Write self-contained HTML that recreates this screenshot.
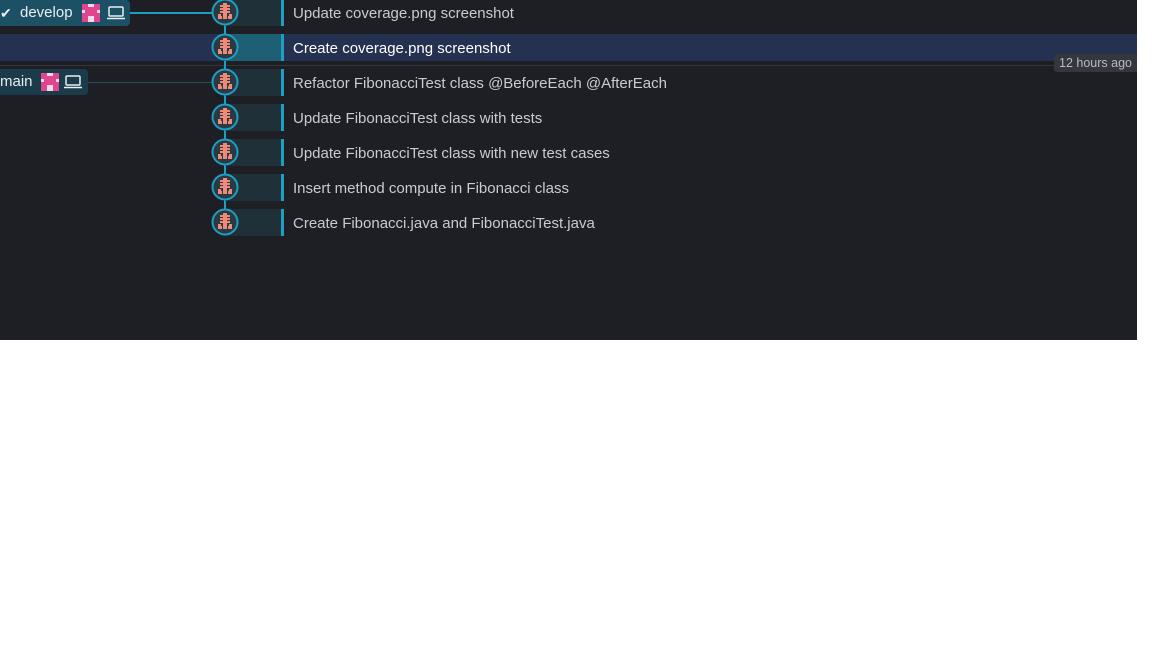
<!DOCTYPE html>
<html><head><meta charset="utf-8"><style>
html,body{margin:0;padding:0;background:#fff;width:1152px;height:648px;overflow:hidden}
#p{position:absolute;left:0;top:0;width:1137px;height:340px;background:#1e1f24;font-family:"Liberation Sans",sans-serif}
.row{position:absolute;left:0;width:1137px;height:27px}
.strip{position:absolute;left:225px;width:56px;height:27px;background:#1f3038}
.bar{position:absolute;left:281px;width:3px;height:27px;background:#1ba0c4}
.msg{position:absolute;left:293px;font-size:15px;line-height:29px;color:#c8ccd2;white-space:nowrap}
.av{position:absolute;left:211px;width:28px;height:28px}
.lbl{position:absolute;left:0;height:26px;border-radius:0 4px 4px 0;color:#e8edf0;font-size:15px;line-height:26px;white-space:nowrap}
</style></head><body><div id="p">
<div style="position:absolute;left:0;top:65px;width:1137px;height:1px;background:#33353b"></div>
<div style="position:absolute;left:224px;top:12px;width:2px;height:210px;background:#1ba0c4"></div>
<div style="position:absolute;left:130px;top:12px;width:82px;height:2px;background:#1ba0c4"></div>
<div style="position:absolute;left:88px;top:82px;width:124px;height:1px;background:#23505e"></div>
<div class="row" style="top:34px;background:#253150"></div>
<div id="rows"></div>
<div class="lbl" style="top:0;width:130px;background:#1c5165"><span style="position:absolute;left:0;top:0;font-size:14px">✔</span><span style="position:absolute;left:20px">develop</span>
<svg style="position:absolute;left:82px;top:4px" width="18" height="18" viewBox="0 0 6 6"><rect width="6" height="6" fill="#f4d9e6"/><path d="M0 0h2v1h2v-1h2v2h-1v1h1v3h-2v-2h-2v2h-2v-3h1v-1h-1z" fill="#e0468f"/></svg>
<svg style="position:absolute;left:106px;top:5px" width="20" height="16" viewBox="0 0 20 16" fill="none" stroke="#e8edf0" stroke-width="1.5"><rect x="3" y="2" width="14" height="9" rx="1"/><path d="M1 13.5h18"/></svg></div>
<div class="lbl" style="top:69px;width:88px;background:#1a3c4a"><span style="position:absolute;left:0">main</span>
<svg style="position:absolute;left:41px;top:4px" width="18" height="18" viewBox="0 0 6 6"><rect width="6" height="6" fill="#f4d9e6"/><path d="M0 0h2v1h2v-1h2v2h-1v1h1v3h-2v-2h-2v2h-2v-3h1v-1h-1z" fill="#e0468f"/></svg>
<svg style="position:absolute;left:63px;top:5px" width="20" height="16" viewBox="0 0 20 16" fill="none" stroke="#e8edf0" stroke-width="1.5"><rect x="3" y="2" width="14" height="9" rx="1"/><path d="M1 13.5h18"/></svg></div>
<div style="position:absolute;left:1054px;top:54px;width:83px;height:18px;background:#34373d;border-radius:3px 0 0 3px;color:#b8bcc2;font-size:12.5px;line-height:18px;text-align:center">12 hours ago</div>
</div>
<script>
var m=["Update coverage.png screenshot","Create coverage.png screenshot","Refactor FibonacciTest class @BeforeEach @AfterEach","Update FibonacciTest class with tests","Update FibonacciTest class with new test cases","Insert method compute in Fibonacci class","Create Fibonacci.java and FibonacciTest.java"];
var h="";
for(var i=0;i<7;i++){var t=35*i-1;
h+='<div class="strip" style="top:'+t+'px;'+(i==1?'background:#1e5f74':'')+'"></div><div class="bar" style="top:'+t+'px"></div>';
h+='<div class="msg" style="top:'+t+'px;'+(i==1?'color:#fff':'')+'">'+m[i]+'</div>';
h+='<svg class="av" style="top:'+(35*i-2)+'px" viewBox="0 0 28 28"><circle cx="14" cy="14" r="12.5" fill="#2b3a42" stroke="#1ba0c4" stroke-width="2"/><path fill="#f08a78" d="M12 5h4v2h3v2h-3v1h3v2h-3v1h3v2h-3v6h-4v-6h-3v-2h3v-1h-3v-2h3v-1h-3v-2h3z M7 16h3v2h1v3h-4z M18 16h3v5h-4v-3h1z M10 20h1v1h-1z M17 20h1v1h-1z"/></svg>';}
document.getElementById("rows").innerHTML=h;
</script>
</body></html>
